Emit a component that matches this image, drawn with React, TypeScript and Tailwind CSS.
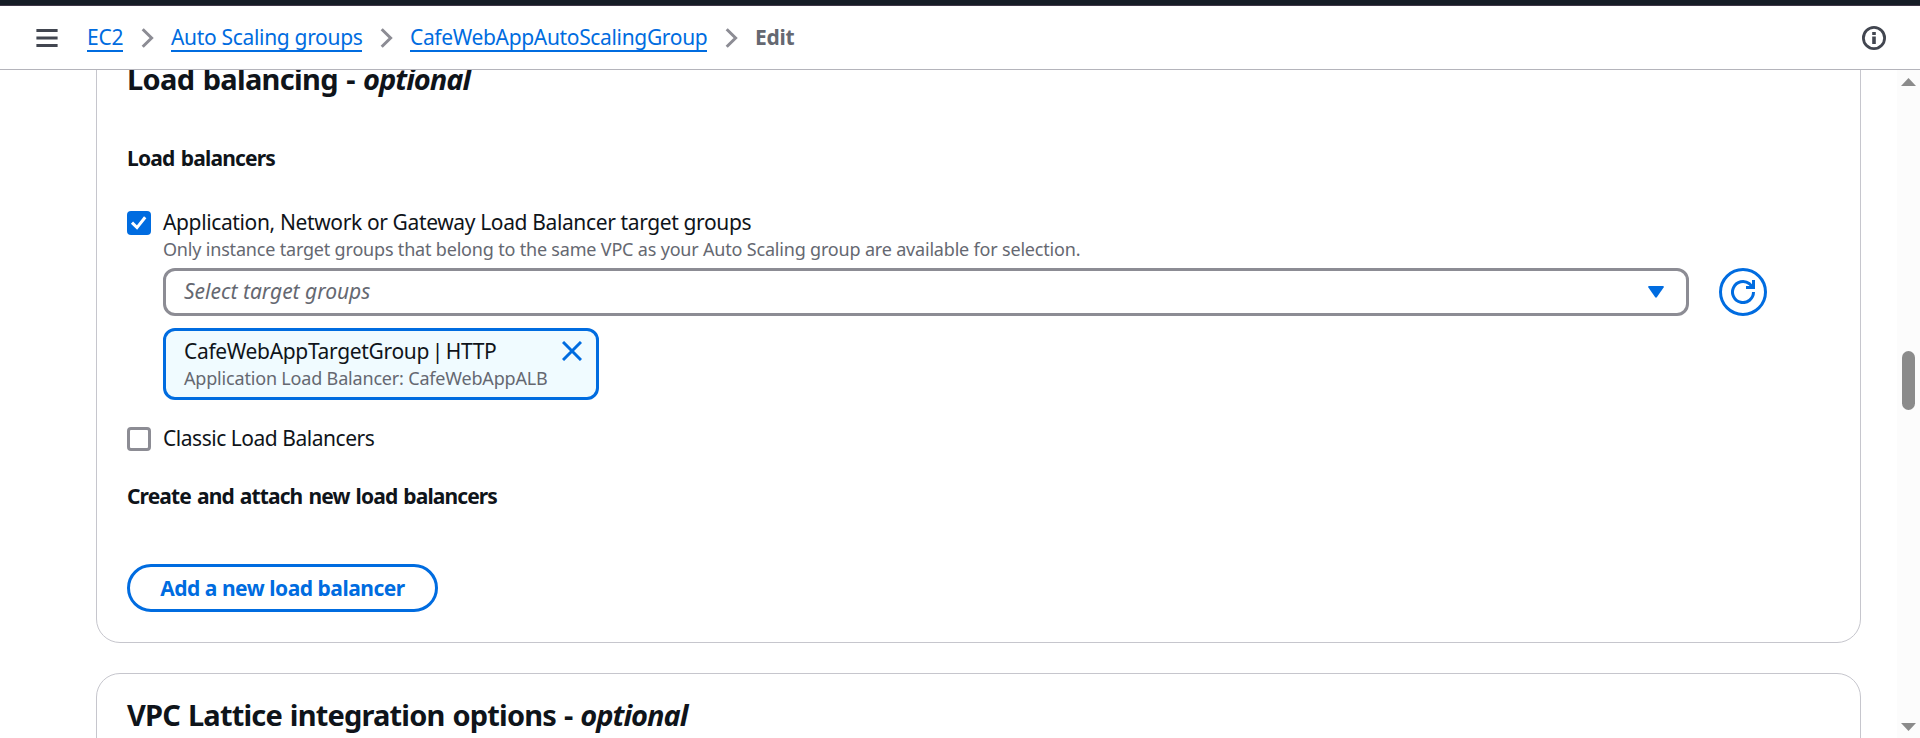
import React from "react";

function Chevron() {
  return (
    <svg className="h-[22px] w-[14px] shrink-0" viewBox="0 0 14 22" fill="none" stroke="#8c8c94" strokeWidth="3">
      <path d="M1.7 2.2 L10.6 11 L1.7 19.8" />
    </svg>
  );
}

function Crumb({ children, className }: { children: React.ReactNode; className: string }) {
  return (
    <a className={"h-[30px] border-b-2 border-[#006ce0] leading-[30px] whitespace-nowrap text-[#006ce0] " + className}>
      {children}
    </a>
  );
}

function Header() {
  return (
    <header className="shrink-0">
      <div className="h-[6px] border-b border-[#3f3747] bg-[#161d26]" />
      <div className="flex h-16 items-start border-b border-[#b4b4bb] bg-white pt-4 pl-9">
        <svg className="mt-[7px] h-[18px] w-[22px] shrink-0" viewBox="0 0 22 18" fill="#424650">
          <path d="M.4 0h21.2v3H.4zM.4 7.4h21.2v3.2H.4zM.4 15h21.2v3H.4z" />
        </svg>
        <nav className="ml-[29px] flex items-start">
          <Crumb className="w-9 tracking-[-0.2px]">EC2</Crumb>
          <span className="mt-[5px] mr-[16px] ml-[18px] flex"><Chevron /></span>
          <Crumb className="w-[191px] tracking-[-0.32px]">Auto Scaling groups</Crumb>
          <span className="mt-[5px] mr-[16px] ml-[18px] flex"><Chevron /></span>
          <Crumb className="w-[297px] tracking-[-0.34px]">CafeWebAppAutoScalingGroup</Crumb>
          <span className="mt-[5px] mr-[16px] ml-[18px] flex"><Chevron /></span>
          <span className="leading-[30px] font-bold tracking-[-0.3px] text-[#656871]">Edit</span>
        </nav>
        <svg className="mt-1 mr-[34px] ml-auto h-6 w-6 shrink-0" viewBox="0 0 24 24" fill="none">
          <circle cx="12" cy="12" r="10.6" stroke="#424650" strokeWidth="2.8" />
          <path d="M10.2 6h3.6v3h-3.6zM10.2 10.4h3.6v7.6h-3.6z" fill="#424650" />
        </svg>
      </div>
    </header>
  );
}

function Scrollbar() {
  return (
    <div className="flex w-[23px] shrink-0 flex-col items-center bg-[#fcfcfc] pt-2 pb-[7px]">
      <svg className="h-2 w-[15px]" viewBox="0 0 15 8" fill="#8b8b8b"><path d="M7.5 0L15 8H0z" /></svg>
      <div className="mt-[265px] h-[59px] w-[13px] rounded-full bg-[#8b8b8b]" />
      <svg className="mt-auto h-2 w-[15px]" viewBox="0 0 15 8" fill="#8b8b8b"><path d="M0 0h15L7.5 8z" /></svg>
    </div>
  );
}

export default function App() {
  return (
    <div className="flex h-[738px] w-[1920px] flex-col overflow-hidden bg-white font-['Noto_Sans',sans-serif] text-[21px] leading-[30px] text-[#0f141a]">
      <Header />
      <div className="flex min-h-0 flex-1">
        <main className="min-w-0 flex-1 overflow-hidden pr-9 pl-24">
          <section className="-mt-[33px] rounded-b-3xl border border-[#c6c6cd] px-[30px] pt-[23px] pb-[30px]">
            <h2 className="text-[29px] leading-9 font-bold whitespace-nowrap">
              <span className="tracking-[-0.69px] [word-spacing:1.5px]">Load balancing - </span><i className="tracking-[-1px]">optional</i>
            </h2>
            <h3 className="mt-[46px] font-bold tracking-[-0.8px] [word-spacing:1.5px] whitespace-nowrap">Load balancers</h3>
            <div className="mt-[34px] flex items-start gap-3">
              <span className="mt-1 flex h-6 w-6 shrink-0 items-center justify-center rounded-[4px] bg-[#006ce0]">
                <svg className="h-6 w-6" viewBox="0 0 24 24" fill="none" stroke="#fff" strokeWidth="3"><path d="M5 11.6l5 5L18.2 6.2" /></svg>
              </span>
              <div className="min-w-0 flex-1">
                <div className="tracking-[-0.37px] whitespace-nowrap">Application, Network or Gateway Load Balancer target groups</div>
                <div className="text-[18px] leading-6 tracking-[-0.186px] whitespace-nowrap text-[#656871]">Only instance target groups that belong to the same VPC as your Auto Scaling group are available for selection.</div>
                <div className="mt-[7px] flex gap-[30px]">
                  <div className="flex h-12 w-[1526px] items-center justify-between rounded-xl border-3 border-[#8c8c94] pr-[22px] pb-[2px] pl-[18px] text-[#656871]">
                    <i>Select target groups</i>
                    <svg className="mt-[2px] h-3 w-4" viewBox="0 0 16 12" fill="#006ce0"><path d="M1 0h14q1.3 .4 .6 1.6L9 11q-1 1.3-2 0L.4 1.6Q-.3 .4 1 0z" /></svg>
                  </div>
                  <button className="flex h-12 w-12 items-center justify-center rounded-full border-3 border-[#006ce0]">
                    <svg className="h-6 w-6" viewBox="0 0 24 24" fill="none" stroke="#006ce0" strokeWidth="3">
                      <path d="M22.5 12A10.5 10.5 0 1 1 18.5 3.8L22 7.5" /><path d="M22.5 0v7.5H15" />
                    </svg>
                  </button>
                </div>
                <div className="mt-3 flex h-[72px] w-[436px] items-start justify-between rounded-xl border-3 border-[#006ce0] bg-[#f0fbff] pt-[5px] pr-[14px] pl-[18px]">
                  <div className="whitespace-nowrap">
                    <div className="tracking-[-0.33px] [word-spacing:-2.4px]">CafeWebAppTargetGroup | HTTP</div>
                    <div className="text-[18px] leading-6 tracking-[-0.18px] text-[#656871]">Application Load Balancer: CafeWebAppALB</div>
                  </div>
                  <svg className="mt-[5px] h-5 w-5" viewBox="0 0 20 20" stroke="#006ce0" strokeWidth="3"><path d="M1 1l18 18M19 1L1 19" /></svg>
                </div>
              </div>
            </div>
            <div className="mt-[23px] flex items-start gap-3">
              <span className="mt-1 h-6 w-6 shrink-0 rounded-[4px] border-3 border-[#8c8c94]" />
              <span className="tracking-[-0.47px] whitespace-nowrap">Classic Load Balancers</span>
            </div>
            <h3 className="mt-7 font-bold tracking-[-0.89px] [word-spacing:1.5px] whitespace-nowrap">Create and attach new load balancers</h3>
            <button className="mt-[53px] flex h-12 w-[311px] items-center justify-center rounded-full border-3 border-[#006ce0] pb-px font-bold tracking-[-0.48px] whitespace-nowrap text-[#006ce0]">
              Add a new load balancer
            </button>
          </section>
          <section className="mt-[30px] h-[120px] rounded-t-3xl border border-[#c6c6cd] px-[30px] pt-[23px]">
            <h2 className="text-[29px] leading-9 font-bold whitespace-nowrap">
              <span className="tracking-[-0.82px] [word-spacing:1.2px]">VPC Lattice integration options - </span><i className="tracking-[-1px]">optional</i>
            </h2>
          </section>
        </main>
        <Scrollbar />
      </div>
    </div>
  );
}
